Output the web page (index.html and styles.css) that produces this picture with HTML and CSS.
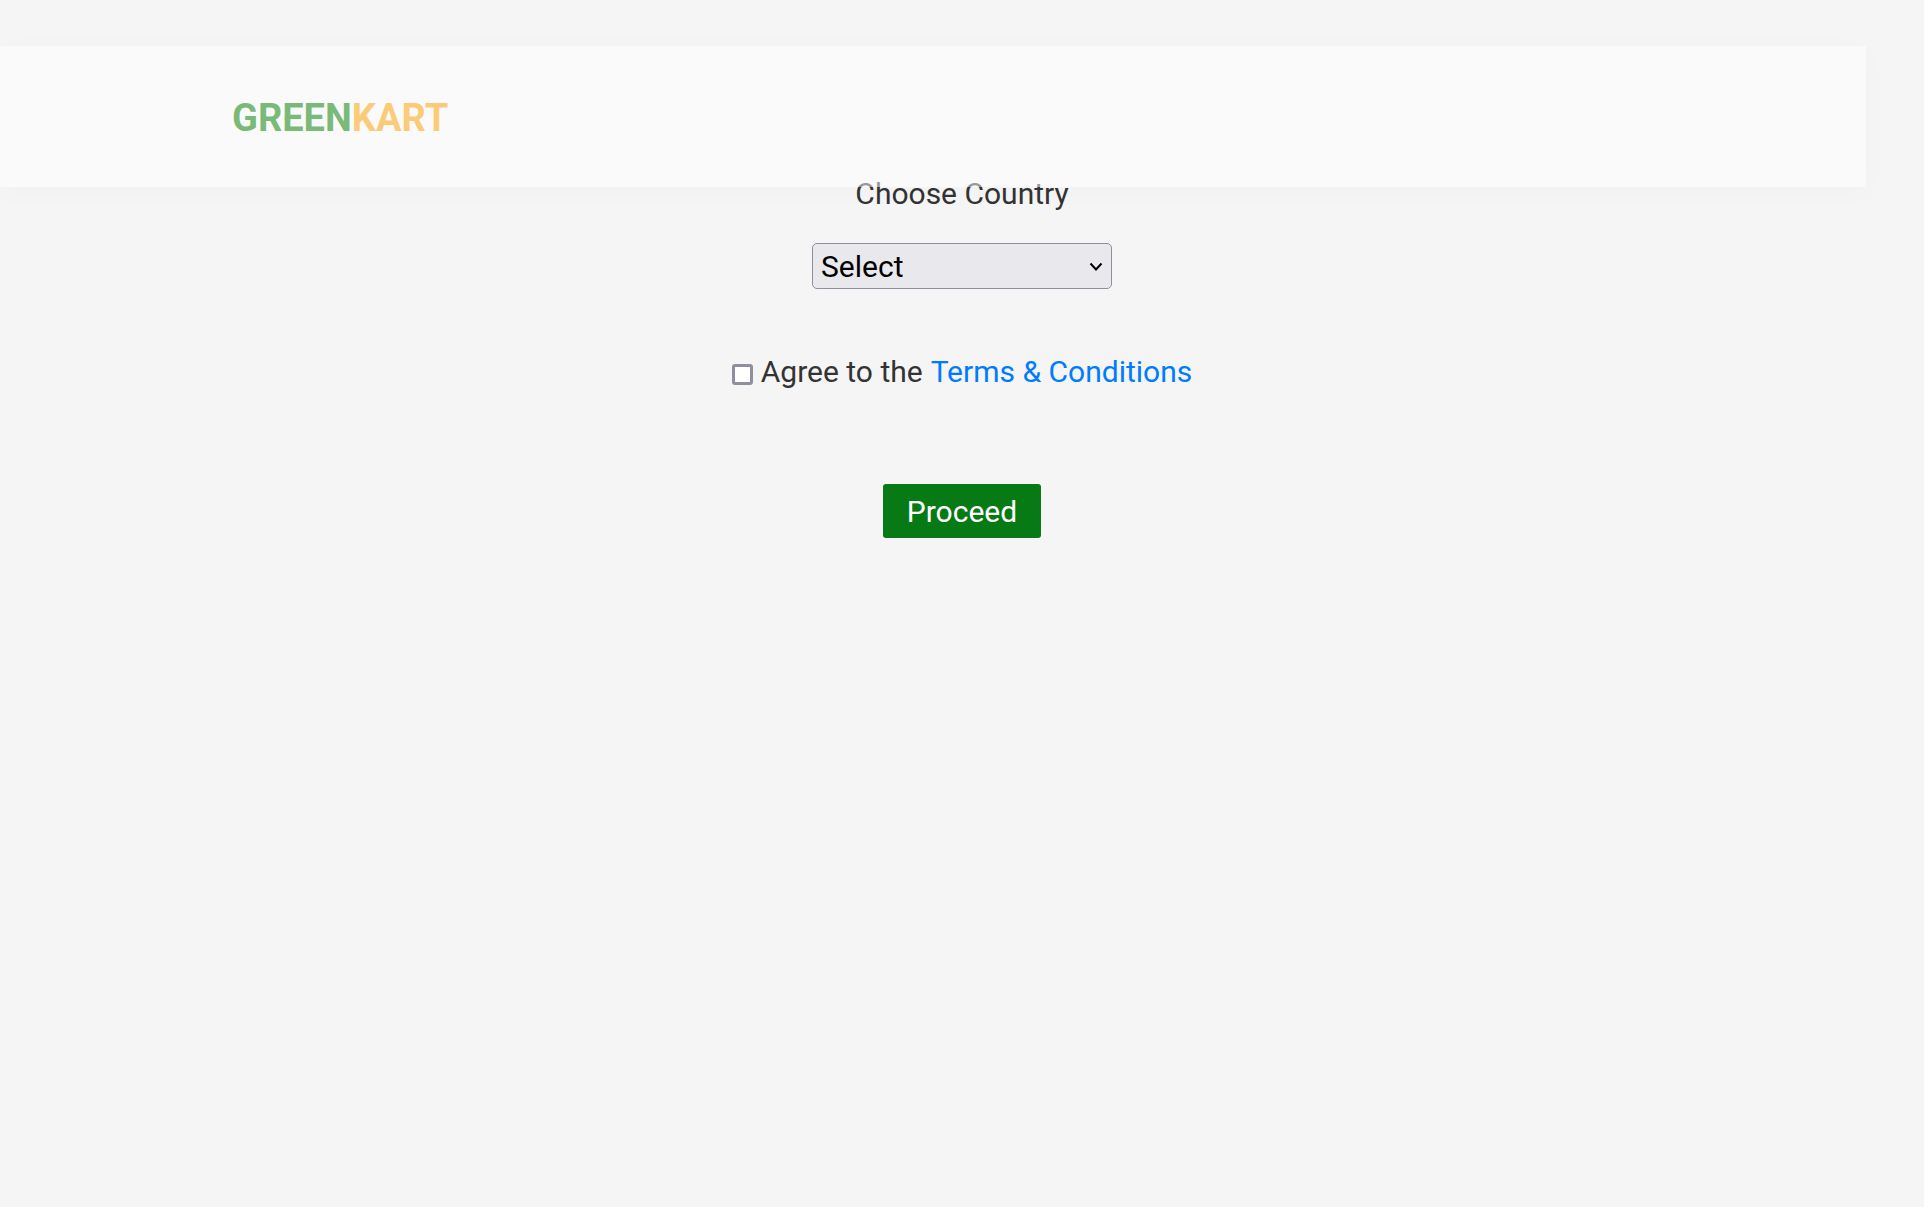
FILE: index.html
```html
<!DOCTYPE html>
<html lang="en">
<head>
<meta charset="utf-8">
<title>GreenKart</title>
<link rel="stylesheet" href="styles.css">
</head>
<body>
<header class="header">
  <div class="brand">GREEN<span class="brand-accent">KART</span></div>
</header>
<main class="checkout">
  <label class="country-label" for="country">Choose Country</label>
  <div class="select-wrap">
    <select class="country" id="country"><option>Select</option></select>
    <svg class="chevron" viewBox="0 0 14 10" aria-hidden="true"><path d="M1.500 1.500L7 7.500l5.500-6"/></svg>
  </div>
  <div class="terms">
    <input class="agree" type="checkbox" id="agree">
    <label for="agree">Agree to the</label>
    <a class="terms-link" href="#">Terms &amp; Conditions</a>
  </div>
  <button class="proceed" type="button">Proceed</button>
</main>
</body>
</html>
```
FILE: styles.css
```css
* { box-sizing: border-box; }

body {
  margin: 0;
  padding-top: 46px;
  background: #f5f5f5;
  color: #333;
  font-family: Roboto, sans-serif;
  font-size: 30px;
  line-height: 36px;
}

/* Translucent bar that overlaps the top of the form */
.header {
  position: relative;
  z-index: 1;
  display: flex;
  align-items: center;
  width: 97%;
  padding: 49px 0 46px 232px;
  background: #fff;
  box-shadow: 0 5px 30px rgba(0, 0, 0, 0.02);
  opacity: 0.5;
}

.brand {
  color: #008000;
  font-size: 38px;
  font-weight: 700;
  line-height: 46px;
}

.brand-accent { color: #ffa500; }

.checkout {
  display: flex;
  flex-direction: column;
  align-items: center;
  margin-top: -11px;
}

.select-wrap {
  position: relative;
  width: 300px;
  margin-top: 31px;
}

.country {
  display: block;
  width: 100%;
  height: 46px;
  padding: 1px 8px 0;
  border: 1px solid #8f8f9d;
  border-radius: 5px;
  appearance: none;
  background: #e9e9ed;
  color: #000;
  font: inherit;
}

.chevron {
  position: absolute;
  top: 19px;
  right: 9px;
  width: 14px;
  height: 10px;
  fill: none;
  stroke: #000;
  stroke-width: 2;
  pointer-events: none;
}

.terms {
  display: flex;
  align-items: center;
  gap: 8px;
  margin-top: 65px;
}

.agree {
  width: 21px;
  height: 21px;
  margin: 4px 0 0;
  border: 3px solid #8f8f9d;
  border-radius: 3px;
  appearance: none;
  background: #fff;
}

.terms-link {
  color: #007bff;
  text-decoration: none;
}

.proceed {
  margin-top: 94px;
  padding: 10px 24px 8px;
  border: 0;
  border-radius: 3px;
  background: #077915;
  color: #fff;
  font: inherit;
}
```
